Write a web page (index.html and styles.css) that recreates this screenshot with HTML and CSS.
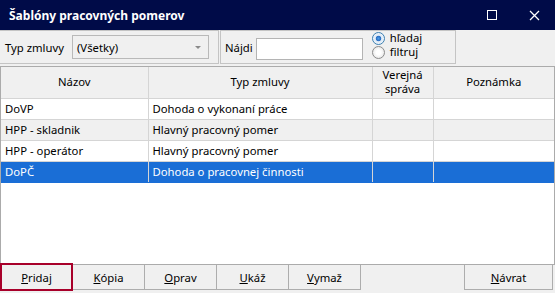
FILE: index.html
```html
<!DOCTYPE html>
<html lang="sk">
<head>
  <meta charset="UTF-8" />
  <title>Šablóny pracovných pomerov</title>
  <link rel="stylesheet" href="styles.css">
</head>
<body>

<div class="window">
  <header class="titlebar">
    <span class="title">Šablóny pracovných pomerov</span>
    <div class="win-btns">
      <span class="btn-max"></span>
      <svg class="btn-close" width="11" height="11" viewBox="0 0 11 11"><path d="M1 1 L10 10 M10 1 L1 10" stroke="#fff" stroke-width="1.3"/></svg>
    </div>
  </header>

  <div class="toolbar">
    <div class="group group-filter">
      <label class="lbl">Typ zmluvy</label>
      <div class="combo">
        <span>(Všetky)</span>
        <span class="arrow"></span>
      </div>
    </div>
    <div class="group group-search">
      <label class="lbl">Nájdi</label>
      <input type="text" class="search" />
      <div class="radios">
        <div class="radio-row"><span class="radio on"></span>hľadaj</div>
        <div class="radio-row"><span class="radio"></span>filtruj</div>
      </div>
    </div>
  </div>

  <div class="grid">
    <table>
      <colgroup>
        <col style="width:147px">
        <col style="width:224px">
        <col style="width:61px">
        <col>
      </colgroup>
      <thead>
        <tr>
          <th>Názov</th>
          <th>Typ zmluvy</th>
          <th>Verejná<br>správa</th>
          <th>Poznámka</th>
        </tr>
      </thead>
      <tbody id="rows"></tbody>
    </table>
  </div>

  <div class="actions">
    <button class="btn active"><u>P</u>ridaj</button>
    <button class="btn"><u>K</u>ópia</button>
    <button class="btn"><u>O</u>prav</button>
    <button class="btn"><u>U</u>káž</button>
    <button class="btn"><u>V</u>ymaž</button>
    <span class="spacer"></span>
    <button class="btn btn-back"><u>N</u>ávrat</button>
  </div>
</div>

<script>
  const templates = [
    { name: "DoVP", type: "Dohoda o vykonaní práce" },
    { name: "HPP - skladnik", type: "Hlavný pracovný pomer" },
    { name: "HPP - operátor", type: "Hlavný pracovný pomer" },
    { name: "DoPČ", type: "Dohoda o pracovnej činnosti", selected: true },
  ];

  const rows = document.getElementById("rows");
  templates.forEach((t, i) => {
    const tr = document.createElement("tr");
    tr.className = t.selected ? "sel" : (i % 2 ? "alt" : "");
    tr.innerHTML = `<td>${t.name}</td><td>${t.type}</td><td></td><td></td>`;
    rows.appendChild(tr);
  });
</script>

</body>
</html>
```

FILE: styles.css
```css
*, *::before, *::after { margin: 0; padding: 0; box-sizing: border-box; }
body {
  font-family: 'Noto Sans', 'Open Sans', sans-serif;
  font-size: 11.3px;
  color: #000;
  background: #f0f0f0;
}
.window {
  width: 555px;
  height: 293px;
  display: flex;
  flex-direction: column;
  background: #f0f0f0;
}
.titlebar {
  height: 30px;
  flex-shrink: 0;
  background: #000b48;
  color: #fff;
  display: flex;
  align-items: center;
  justify-content: space-between;
  padding: 0 15px 0 9px;
}
.title {
  font-weight: bold;
  font-size: 12px;
}
.win-btns {
  display: flex;
  align-items: center;
  gap: 32px;
}
.btn-max {
  width: 10px;
  height: 10px;
  border: 1px solid #fff;
}

.toolbar {
  height: 34px;
  flex-shrink: 0;
  display: flex;
}
.group {
  height: 34px;
  border: 1px solid #c4c4c4;
  display: flex;
  align-items: center;
}
.group-filter {
  width: 219px;
  padding-left: 5px;
  border-left: none;
}
.group-search {
  width: 236px;
  margin-left: 1px;
  padding-left: 4px;
}
.lbl {
  margin-right: 8px;
}
.combo {
  width: 137px;
  height: 24px;
  border: 1px solid #b9b9b9;
  background: #f0f0f0;
  display: flex;
  align-items: center;
  justify-content: space-between;
  padding: 0 7px 0 4px;
}
.arrow {
  width: 0;
  height: 0;
  border-left: 3px solid transparent;
  border-right: 3px solid transparent;
  border-top: 3px solid #8a8a8a;
}
.group-search .lbl {
  margin-right: 3px;
}
.search {
  width: 107px;
  height: 22px;
  border: 1px solid #b4b4b4;
  background: #fff;
  margin-top: 4px;
}
.radios {
  margin-left: 9px;
  display: flex;
  flex-direction: column;
  align-self: flex-start;
  line-height: 14px;
}
.radio-row {
  display: flex;
  align-items: center;
  gap: 5px;
}
.radio {
  width: 13px;
  height: 13px;
  border-radius: 50%;
  border: 1px solid #8c8c8c;
  background: radial-gradient(circle, #fff 30%, #dcdcdc 100%);
}
.radio.on {
  border-color: #3c7fb1;
  background: radial-gradient(circle, #4a9ae8 0, #2a6fc4 30%, #dbe8f5 40%, #fff 100%);
}

.grid {
  margin-top: 2px;
  height: 199px;
  flex-shrink: 0;
  border: 1px solid #ababab;
  background: #fff;
  overflow: hidden;
}
table {
  width: 100%;
  border-collapse: collapse;
  table-layout: fixed;
}
th {
  height: 31px;
  padding: 0;
  background: #f0f0f0;
  font-weight: normal;
  line-height: 14px;
  border-right: 1px solid #d5d5d5;
  border-bottom: 1px solid #d5d5d5;
}
td {
  height: 21px;
  padding: 0 4px;
  border-right: 1px solid #d5d5d5;
  border-bottom: 1px solid #d5d5d5;
  white-space: nowrap;
}
th:last-child, td:last-child { border-right: none; }
tr.alt td { background: #f0f0f0; }
tr.sel td {
  background: #1a6ed6;
  color: #fff;
  border-bottom-color: #1a6ed6;
}

.actions {
  height: 25px;
  flex-shrink: 0;
  display: flex;
  align-items: flex-start;
}
.btn {
  width: 73px;
  height: 25px;
  font: inherit;
  background: #f0f0f0;
  border: 1px solid #adadad;
  border-top: none;
  margin-right: -1px;
}
.btn.active {
  height: 28px;
  margin-top: -2px;
  border: 2px solid #a8002a;
  position: relative;
}
.spacer { flex: 1; }
.btn-back {
  width: 89px;
  margin-right: 2px;
}
```
